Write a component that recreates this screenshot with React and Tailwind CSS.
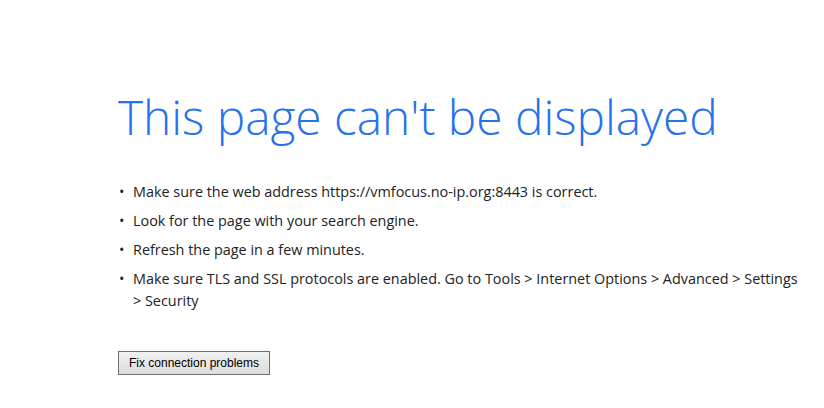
export default function App() {
  const items = [
    "Make sure the web address https://vmfocus.no-ip.org:8443 is correct.",
    "Look for the page with your search engine.",
    "Refresh the page in a few minutes.",
    "Make sure TLS and SSL protocols are enabled. Go to Tools > Internet Options > Advanced > Settings > Security",
  ];
  return (
    <div className="w-[824px] h-[408px] bg-white overflow-hidden" style={{ fontFamily: '"Open Sans", "Noto Sans", sans-serif' }}>
      <div className="pl-[118px] pt-[82px] w-[805px]">
        <h1 className="text-[#2672ec] text-[47.8px] font-light leading-[70px] whitespace-nowrap">
          This page can't be displayed
        </h1>
        <ul className="mt-[29px] text-[14.4px] leading-[22px] text-[#222]">
          {items.map((t, i) => (
            <li key={i} className="flex mb-[7px]">
              <span className="w-[15px] shrink-0 pl-[1px]">•</span>
              <span>{t}</span>
            </li>
          ))}
        </ul>
        <button
          className="mt-[32px] w-[152px] h-[24px] border border-[#707070] bg-gradient-to-b from-[#f2f2f2] to-[#dcdcdc] text-[12px] text-black leading-none"
          style={{ fontFamily: '"Liberation Sans", Arial, sans-serif' }}
        >
          Fix connection problems
        </button>
      </div>
    </div>
  );
}
